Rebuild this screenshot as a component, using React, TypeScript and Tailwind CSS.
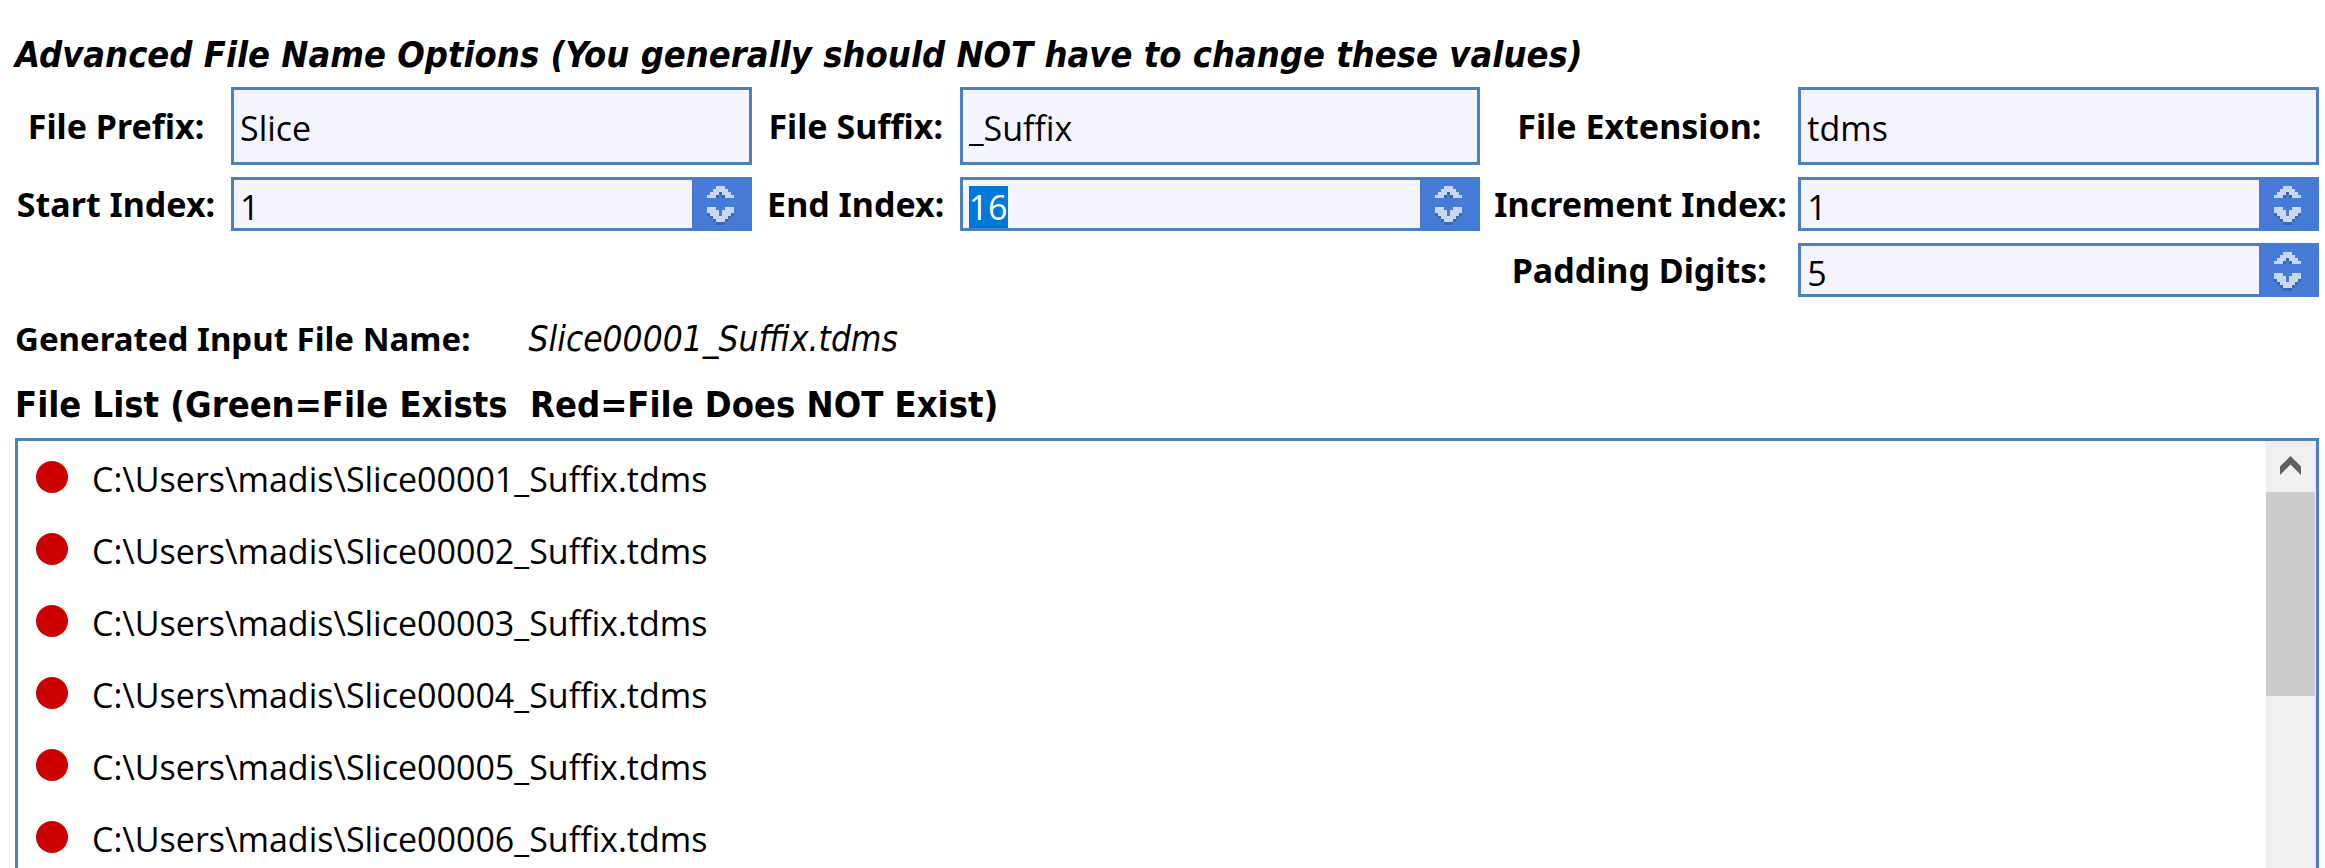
import React, { useEffect, useRef, useState } from 'react';

const boxClass = 'min-w-0 border-3 border-[#4d80c0] bg-[#f4f4ff]';
const inputClass =
  'block w-full bg-transparent px-1.5 text-[34px] leading-[42px] text-black caret-transparent outline-none selection:bg-[#0078d7] selection:text-white font-["Open_Sans",sans-serif]';
const labelClass =
  'self-center text-center text-[34px] leading-[44px] font-bold whitespace-nowrap font-["Noto_Sans",sans-serif]';

function TextField({ id, label, value, onChange }: { id: string; label: string; value: string; onChange: (v: string) => void }) {
  return (
    <>
      <label htmlFor={id} className={labelClass}>{label}</label>
      <div className={`${boxClass} flex h-[78px] items-center pt-1`}>
        <input id={id} type="text" className={inputClass} value={value} onChange={(e) => onChange(e.target.value)} />
      </div>
    </>
  );
}

function ChevronUp() {
  return (
    <svg viewBox="0 0 20 9" className="block h-[27px] w-[60px]" shapeRendering="crispEdges" aria-hidden="true">
      <path fill="#c8d8f4" d="M8 3h3v1h1v1h1v1h1v1h-3v-1h-1v-1h-1v1h-1v1h-3v-1h1v-1h1v-1h1z" />
      <path fill="#3866b0" d="M9 5h1v1h-1zM8 6h1v1h-1zM10 6h1v1h-1z" />
    </svg>
  );
}

function ChevronDown() {
  return (
    <svg viewBox="0 0 20 9" className="block h-[27px] w-[60px]" shapeRendering="crispEdges" aria-hidden="true">
      <path fill="#3866b0" d="M5 3h9v1h-1v1h-1v1h-1v1h-3v-1h-1v-1h-1v-1h-1z" />
      <path fill="#c8d8f4" d="M5 1h3v1h1v1h1v-1h1v-1h3v2h-1v1h-1v1h-1v1h-3v-1h-1v-1h-1v-1h-1z" />
      <path fill="#467bd7" d="M9 2h1v2h-1z" />
    </svg>
  );
}

function SpinField({ id, label, value, onChange, selected = false }: { id: string; label: string; value: number; onChange: (v: number) => void; selected?: boolean }) {
  const ref = useRef<HTMLInputElement>(null);
  useEffect(() => {
    if (selected && ref.current) {
      ref.current.focus();
      ref.current.select();
    }
  }, [selected]);
  return (
    <>
      <label htmlFor={id} className={labelClass}>{label}</label>
      <div className="flex h-[54px] min-w-0">
        <div className={`${boxClass} flex flex-1 items-end border-r-0`}>
          <input
            ref={ref}
            id={id}
            type="text"
            inputMode="numeric"
            className={inputClass}
            value={value}
            onChange={(e) => onChange(Number(e.target.value) || 0)}
          />
        </div>
        <div className="flex w-[60px] flex-col bg-[#467bd7]">
          <button type="button" aria-label={`Increase ${label}`} onClick={() => onChange(value + 1)}><ChevronUp /></button>
          <button type="button" aria-label={`Decrease ${label}`} onClick={() => onChange(Math.max(0, value - 1))}><ChevronDown /></button>
        </div>
      </div>
    </>
  );
}

export default function App() {
  const [prefix, setPrefix] = useState('Slice');
  const [suffix, setSuffix] = useState('_Suffix');
  const [extension, setExtension] = useState('tdms');
  const [start, setStart] = useState(1);
  const [end, setEnd] = useState(16);
  const [step, setStep] = useState(1);
  const [digits, setDigits] = useState(5);

  const fileName = (index: number) => `${prefix}${String(index).padStart(digits, '0')}${suffix}.${extension}`;
  const visible = Array.from({ length: 6 }, (_, i) => start + i * step).filter((n) => n <= end);

  return (
    <main className='flex h-screen flex-col overflow-hidden bg-white pt-[31px] pr-1.5 pl-[15px] text-black font-["DejaVu_Sans_Condensed","DejaVu_Sans",sans-serif]'>
      <h1 className="text-4xl leading-[48px] font-bold whitespace-nowrap italic">
        Advanced File Name Options (You generally should NOT have to change these values)
      </h1>

      <form className="mt-2 grid grid-cols-[202px_1fr_180px_1fr_290px_1fr] gap-x-3.5 gap-y-3">
        <TextField id="prefix" label="File Prefix:" value={prefix} onChange={setPrefix} />
        <TextField id="suffix" label="File Suffix:" value={suffix} onChange={setSuffix} />
        <TextField id="extension" label="File Extension:" value={extension} onChange={setExtension} />
        <SpinField id="start" label="Start Index:" value={start} onChange={setStart} />
        <SpinField id="end" label="End Index:" value={end} onChange={setEnd} selected />
        <SpinField id="step" label="Increment Index:" value={step} onChange={setStep} />
        <div className="col-span-4" />
        <SpinField id="digits" label="Padding Digits:" value={digits} onChange={setDigits} />
      </form>

      <div className="mt-5 flex h-11 items-baseline gap-[58px] leading-[44px] whitespace-nowrap">
        <span className='font-["Noto_Sans",sans-serif] text-[33px] font-bold'>Generated Input File Name:</span>
        <output className="text-[35px] italic">{fileName(start)}</output>
      </div>

      <h2 className="mt-5 text-4xl leading-[48px] font-bold whitespace-pre">
        {'File List (Green=File Exists  Red=File Does NOT Exist)'}
      </h2>

      <section className="mt-[9px] flex min-h-0 flex-1 overflow-hidden border-3 border-b-0 border-[#4d80c0]">
        <ul className='min-w-0 flex-1 font-["Open_Sans",sans-serif] text-[34px]'>
          {visible.map((n) => (
            <li key={n} className="flex h-[72px] items-center gap-6 pl-[18px] whitespace-nowrap">
              <span className="size-8 shrink-0 rounded-full bg-[#cc0000]" />
              <span className="pt-1">{`C:\\Users\\madis\\${fileName(n)}`}</span>
            </li>
          ))}
        </ul>
        <div className="flex w-[50px] flex-col bg-[#f0f0f0]">
          <button type="button" aria-label="Scroll up" className="h-[51px]">
            <svg viewBox="0 0 50 51" className="block h-[51px] w-[50px]" aria-hidden="true">
              <path fill="#606060" d="M14 25.5L24.5 15L35 25.5V34L24.5 23.5L14 34z" />
            </svg>
          </button>
          <div className="mr-px h-[204px] bg-[#cdcdcd]" />
        </div>
      </section>
    </main>
  );
}
